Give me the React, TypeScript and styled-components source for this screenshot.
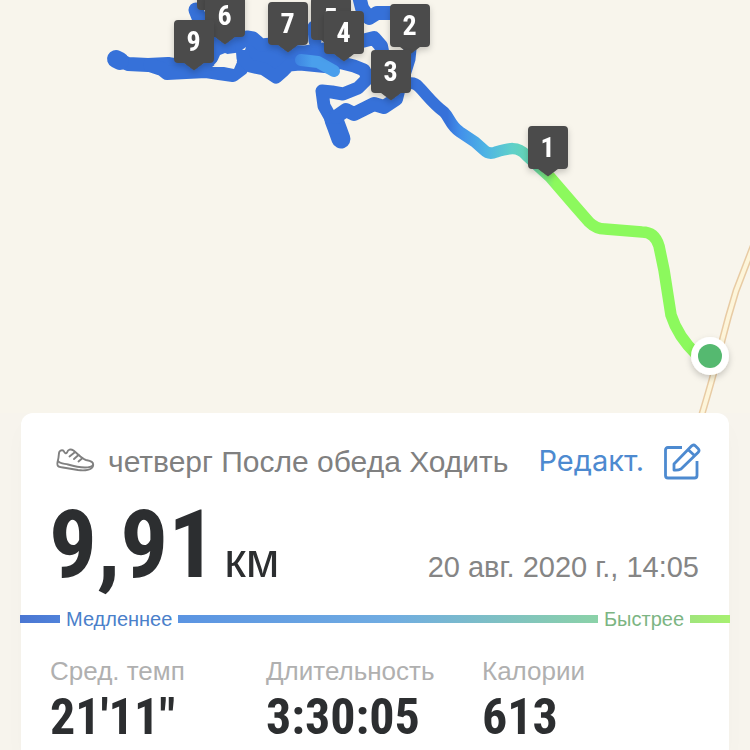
import React from "react";
import styled, { createGlobalStyle } from "styled-components";

const GlobalStyle = createGlobalStyle`
  * { box-sizing: border-box; }
  body {
    margin: 0;
    background: #f7f4ed;
    font-family: "Liberation Sans", Arial, sans-serif;
    color: #2c2e30;
  }
`;

const condensed = `"Roboto Condensed", "Arial Narrow", sans-serif`;

const Page = styled.main`
  display: flex;
  flex-direction: column;
  min-height: 100vh;
  overflow: hidden;
`;

const RouteMap = styled.svg`
  display: block;
  width: 100%;
  height: auto;
`;

const PinLabel = styled.text`
  font-family: ${condensed};
  font-size: 28px;
  font-weight: 700;
  fill: #fff;
  text-anchor: middle;
`;

const Card = styled.section`
  flex: 1;
  margin: 0 21px;
  background: #fff;
  border-radius: 12px 12px 0 0;
  box-shadow: 0 12px 24px rgba(60, 60, 60, 0.02);
`;

const Header = styled.header`
  display: flex;
  align-items: center;
  padding: 30px 28px 0 35px;
  height: 68px;
`;

const Title = styled.h1`
  flex: 1;
  margin: 0 0 0 13px;
  font-size: 30px;
  line-height: 36px;
  font-weight: 400;
  color: #808080;
  white-space: nowrap;
`;

const EditButton = styled.button`
  display: flex;
  align-items: center;
  gap: 20px;
  padding: 0 0 2px;
  border: 0;
  background: none;
  color: #4d8ad0;
  font-family: Inter, Roboto, sans-serif;
  font-size: 29px;
  line-height: 36px;
  cursor: pointer;
`;

const Summary = styled.div`
  display: flex;
  align-items: baseline;
  justify-content: space-between;
  padding: 8px 30px 0 28px;
  height: 128px;
`;

const Distance = styled.p`
  margin: 0;
  font-family: ${condensed};
  font-size: 95px;
  line-height: 112px;
  font-weight: 700;
  white-space: nowrap;
`;

const Unit = styled.span`
  margin-left: 8px;
  font-family: "Liberation Sans", Arial, sans-serif;
  font-size: 49px;
  font-weight: 400;
`;

const DateText = styled.time`
  font-size: 29px;
  color: #858585;
  white-space: nowrap;
`;

const PaceScale = styled.div`
  display: flex;
  align-items: center;
  height: 24px;
  margin: -2px -1px 0;
  font-size: 20px;
  line-height: 24px;
`;

const Segment = styled.span<{ $from: string; $mid?: string; $to: string; $grow?: boolean }>`
  flex: ${(p) => (p.$grow ? "1" : "0 0 40px")};
  height: 8px;
  background: linear-gradient(90deg, ${(p) => p.$from}, ${(p) => (p.$mid ? `${p.$mid} 50%,` : "")} ${(p) => p.$to});
`;

const PaceLabel = styled.span<{ $color: string }>`
  padding: 0 6px;
  color: ${(p) => p.$color};
`;

const Stats = styled.dl`
  display: grid;
  grid-template-columns: repeat(3, 1fr);
  margin: 0;
  padding: 24px 31px 0 29px;
`;

const Stat = styled.div`
  min-width: 0;
`;

const StatLabel = styled.dt`
  font-size: 26px;
  line-height: 32px;
  color: #b0b0b0;
  white-space: nowrap;
`;

const StatValue = styled.dd`
  margin: 0;
  font-family: ${condensed};
  font-size: 50px;
  line-height: 61px;
  font-weight: 700;
`;

const pins = [
  { id: "north", x: 197, y: -33 },
  { id: "km6", n: 6, x: 205, y: -6 },
  { id: "km9", n: 9, x: 174, y: 20 },
  { id: "km7", n: 7, x: 268, y: 2 },
  { id: "km5", n: 5, x: 311, y: -3 },
  { id: "km4", n: 4, x: 324, y: 11 },
  { id: "km2", n: 2, x: 390, y: 4 },
  { id: "km3", n: 3, x: 371, y: 50 },
  { id: "km1", n: 1, x: 528, y: 126 },
];

const stats = [
  { label: "Сред. темп", value: "21'11\"" },
  { label: "Длительность", value: "3:30:05" },
  { label: "Калории", value: "613" },
];

function Pin({ n, x, y }: { n?: number; x: number; y: number }) {
  return (
    <g transform={`translate(${x} ${y})`} filter="url(#shadow)">
      <path
        d="M4 0H36Q40 0 40 4V39Q40 43 36 43H30L20 50.500L10 43H4Q0 43 0 39V4Q0 0 4 0Z"
        fill="#4c4c4c"
      />
      {n !== undefined && <PinLabel x="19.500" y="31">{n}</PinLabel>}
    </g>
  );
}

function Route() {
  return (
    <RouteMap viewBox="0 0 750 413" role="img" aria-label="Маршрут">
      <defs>
        <linearGradient id="pace" gradientUnits="userSpaceOnUse" x1="440" y1="0" x2="560" y2="0">
          <stop offset="0.06" stopColor="#3671d9" />
          <stop offset="0.17" stopColor="#4290ea" />
          <stop offset="0.38" stopColor="#4eb4e4" />
          <stop offset="0.6" stopColor="#60d0ca" />
          <stop offset="0.78" stopColor="#66d6ad" />
          <stop offset="0.95" stopColor="#8cf95d" />
        </linearGradient>
        <linearGradient id="burst" gradientUnits="userSpaceOnUse" x1="293" y1="0" x2="312" y2="0">
          <stop offset="0" stopColor="#3c80e0" />
          <stop offset="1" stopColor="#4a9fec" />
        </linearGradient>
        <filter id="shadow" x="-30%" y="-30%" width="160%" height="170%">
          <feDropShadow dx="0" dy="3" stdDeviation="3" floodColor="#000" floodOpacity="0.2" />
        </filter>
      </defs>
      <rect width="750" height="413" fill="#f8f5ec" />
      <g fill="none">
        <path d="M754 244L736 291Q728 317 722 341Q716 367 702 414" stroke="#e8cba4" strokeWidth="7" />
        <path d="M754 244L736 291Q728 317 722 341Q716 367 702 414" stroke="#fdf5da" strokeWidth="4" />
      </g>
      <g stroke="#3671d9" fill="none" strokeWidth="13" strokeLinecap="round" strokeLinejoin="round">
        <path d="M117 59L128 64L148 65L168 64L190 68" strokeWidth="14" />
        <path d="M116 59L120 61" strokeWidth="18" />
        <path d="M150 65L162 69L167 73L186 72L206 71L219 73L233 75L241 69L246 58" strokeWidth="14" />
        <path d="M196 10L200 20L214 32" strokeWidth="15" />
        <path d="M203 62L214 50L226 44L241 42" strokeWidth="20" />
        <path d="M242 45L247 37L253 38L261 45L272 44L286 51L305 52L324 49L342 61L330 67L300 64L289 65L284 70L276 77L264 69L250 66L243 58Z" fill="#3671d9" />
        <path d="M314 27L315 41M316 57L342 63L354 66L364 70L368 78L358 88L343 94L332 92L322 91L324 106L333 122L341 139" />
        <path d="M334 120L337 128L341 139" strokeWidth="19" />
        <path d="M336 117L346 110L354 114L362 110L374 104L384 107L396 99L398 91L390 82" strokeWidth="14" />
        <path d="M359 -4L362 8L369 18L377 13L394 13" strokeWidth="14" />
        <path d="M362 41L374 38L381 46L383 56" strokeWidth="14" />
        <path d="M410 49L409 59L404 75" />
      </g>
      <path d="M301 60L318 62L334 71" fill="none" stroke="url(#burst)" strokeWidth="12" strokeLinecap="round" strokeLinejoin="round" />
      <path d="M216 64L220 55L225 53L230 55L237 62L234 69L224 67L212 67Z" fill="#f8f5ec" />
      <path d="M242 50L246 47L245 50Z" fill="#f8f5ec" />
      <path
        d="M398 88Q412 79 419 87C427 95 432 103 444 112C450 118 450 125 460 132L475 142L484 150Q489 155 496 152C509 148 518 146 526 155L539 167L550 177L575 206L589 222Q596 229 605 229L642 232Q655 232 659 246L664 270L671 315Q678 337 697 355"
        fill="none" stroke="url(#pace)" strokeWidth="11.500" strokeLinejoin="round"
      />
      <g filter="url(#shadow)">
        <circle cx="710" cy="356" r="19" fill="#fff" />
      </g>
      <circle cx="710" cy="356" r="12" fill="#55b970" />
      {pins.map((pin) => <Pin key={pin.id} n={pin.n} x={pin.x} y={pin.y} />)}
    </RouteMap>
  );
}

function ShoeIcon() {
  return (
    <svg width="39" height="28" viewBox="0 0 39 28" fill="none" stroke="#808080" strokeWidth="1.900" strokeLinecap="round" strokeLinejoin="round" aria-hidden="true">
      <path d="M3.500 3.500C2.500 5 3 9 2 12C1.200 15 1 17 2 18C3 19 6 19.500 10 20L22 22C29 23 36 22 37 18C38 14 35 13 30 12C26 11 22 6 17.500 2.500C14.500 0.500 12 1.500 11 4.500C10 6 8.500 5 8 3.500C7.500 2 5 1.500 3.500 3.500Z" />
      <path d="M2 13C4 16 8 15.500 12 16.500C17 18 24 19.500 29 19.500C33 19.500 36 18.500 37 17" />
      <path d="M13.500 8.500L18.500 4.500M18 11L22.500 7M22.500 13.500L26 10.500" />
    </svg>
  );
}

function EditIcon() {
  return (
    <svg width="37" height="37" viewBox="0 0 37 37" fill="none" stroke="currentColor" strokeWidth="2.800" strokeLinejoin="round" strokeLinecap="butt" aria-hidden="true">
      <path d="M18 4.500H4Q1.500 4.500 1.500 7V32.500Q1.500 35 4 35H30.500Q33 35 33 32.500V18" />
      <path d="M10 27V21L27.500 3Q29.500 1 31.500 3L34 5.500Q36 7.500 34 9.500L17 26Q14 27.500 10 27ZM24 6.500L31 13" />
    </svg>
  );
}

export default function App() {
  return (
    <Page>
      <GlobalStyle />
      <Route />
      <Card>
        <Header>
          <ShoeIcon />
          <Title>четверг После обеда Ходить</Title>
          <EditButton type="button">Редакт.<EditIcon /></EditButton>
        </Header>
        <Summary>
          <Distance>9,91<Unit>км</Unit></Distance>
          <DateText dateTime="2020-08-20T14:05">20 авг. 2020 г., 14:05</DateText>
        </Summary>
        <PaceScale>
          <Segment $from="#4a76d2" $to="#5082da" />
          <PaceLabel $color="#4a80ca">Медленнее</PaceLabel>
          <Segment $grow $from="#5b94e2" $mid="#70ace2" $to="#8bd2a8" />
          <PaceLabel $color="#7cb583">Быстрее</PaceLabel>
          <Segment $from="#a0e57c" $to="#a7f070" />
        </PaceScale>
        <Stats>
          {stats.map((s) => (
            <Stat key={s.label}>
              <StatLabel>{s.label}</StatLabel>
              <StatValue>{s.value}</StatValue>
            </Stat>
          ))}
        </Stats>
      </Card>
    </Page>
  );
}
